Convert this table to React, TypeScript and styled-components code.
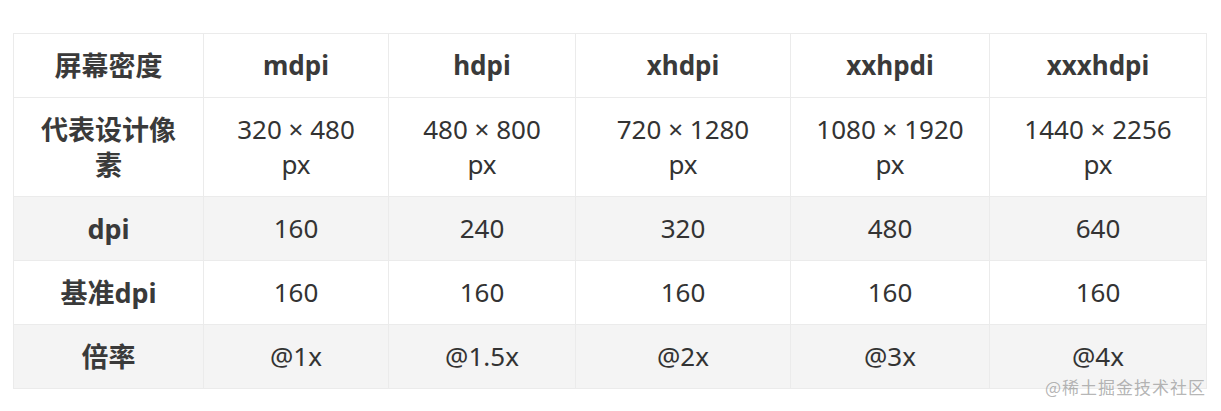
import React from 'react'
import styled, { createGlobalStyle } from 'styled-components'

const GlobalStyle = createGlobalStyle`
  body {
    margin: 0;
    background: #fff;
    font-family: "Noto Sans", "Noto Sans CJK SC", sans-serif;
    color: #333;
  }
`;

const Page = styled.div`
  padding: 33px 0 23px 13px;
`;

const Frame = styled.div`
  position: relative;
  width: 1193px;
`;

const Table = styled.table`
  width: 1193px;
  border-collapse: collapse;
  table-layout: fixed;
`;

const Row = styled.tr<{ $shaded: boolean }>`
  background-color: ${({ $shaded }) => ($shaded ? '#f4f4f4' : '#fff')};
`;

const Cell = styled.td<{ $bold: boolean; $label: boolean }>`
  padding: 14px 24px;
  border: 1px solid #ebebeb;
  text-align: center;
  font-size: ${({ $label }) => ($label ? '27px' : '26px')};
  line-height: 35px;
  font-weight: ${({ $bold }) => ($bold ? 700 : 400)};
  color: ${({ $bold }) => ($bold ? '#3a3a3a' : '#333')};
`;

const Watermark = styled.div`
  position: absolute;
  right: 0;
  bottom: -9px;
  font-size: 17px;
  line-height: 22px;
  color: rgba(140, 140, 140, 0.65);
  font-family: "Noto Sans CJK SC", sans-serif;
  letter-spacing: 1px;
`;

const widths = [190, 185, 187, 215, 199, 217]

const rows = [
  ['屏幕密度', 'mdpi', 'hdpi', 'xhdpi', 'xxhpdi', 'xxxhdpi'],
  ['代表设计像素', '320 × 480 px', '480 × 800 px', '720 × 1280 px', '1080 × 1920 px', '1440 × 2256 px'],
  ['dpi', '160', '240', '320', '480', '640'],
  ['基准dpi', '160', '160', '160', '160', '160'],
  ['倍率', '@1x', '@1.5x', '@2x', '@3x', '@4x'],
]

const App: React.FC = () => {
  return (
    <Page>
      <GlobalStyle />
      <Frame>
        <Table>
          <colgroup>
            {widths.map((w, i) => (
              <col key={i} style={{ width: w }} />
            ))}
          </colgroup>
          <tbody>
            {rows.map((row, r) => (
              <Row key={r} $shaded={r === 2 || r === 4}>
                {row.map((text, c) => (
                  <Cell key={c} $bold={r === 0 || c === 0} $label={c === 0}>
                    {text}
                  </Cell>
                ))}
              </Row>
            ))}
          </tbody>
        </Table>
        <Watermark>@稀土掘金技术社区</Watermark>
      </Frame>
    </Page>
  )
}

export default App
